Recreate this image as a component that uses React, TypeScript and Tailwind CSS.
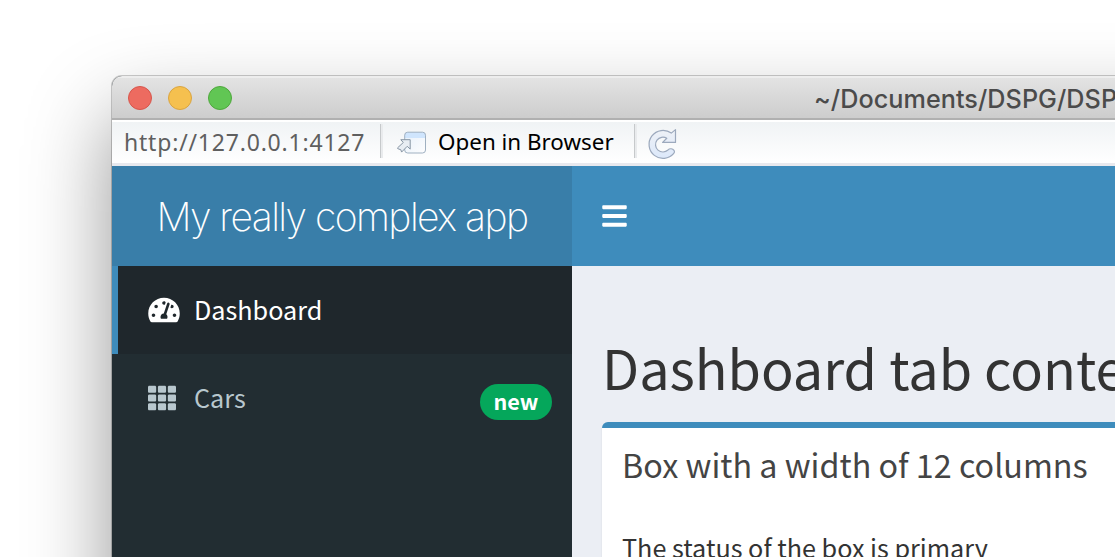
import { FaBars, FaTachometerAlt, FaTh } from 'react-icons/fa';

const source = "font-['Noto_Sans_CJK_SC','Noto_Sans',sans-serif]";

function OpenIcon() {
  return (
    <svg className="h-[24px] w-[32px] shrink-0" viewBox="0 0 32 24">
      <defs>
        <linearGradient id="pane" x1="0" y1="0" x2="1" y2="1">
          <stop offset="0" stopColor="#e6f0fa" />
          <stop offset="1" stopColor="#fdfdfe" />
        </linearGradient>
      </defs>
      <rect x="8.7" y="1.2" width="20.8" height="20.8" rx="3" fill="url(#pane)" />
      <path d="M8.7 7V4.2a3 3 0 0 1 3-3h14.8a3 3 0 0 1 3 3V7z" fill="#cfe5fd" />
      <rect x="8.7" y="1.2" width="20.8" height="20.8" rx="3" fill="none" stroke="#9fb0c1" />
      <path d="M4.8 8.7h9.4v9.4l-3-2.8-5.6 5.8-.8-2.4-2.6-.8-.8-.9 5.9-5.5z" fill="#e8edf3" stroke="#8795a4" strokeLinejoin="round" />
    </svg>
  );
}

function ReloadIcon() {
  return (
    <svg className="h-[32px] w-[30px] shrink-0" viewBox="0 0 30 32">
      <defs>
        <linearGradient id="arrow" x1="0" y1="0" x2="0" y2="1">
          <stop offset="0" stopColor="#eef1f6" />
          <stop offset="1" stopColor="#dce8fa" />
        </linearGradient>
      </defs>
      <path
        d="M24.3 5.1 28.5 1.6V14.4H15.6L19.8 10.3A7.4 7.4 0 1 0 21 22C22.6 20 25.8 20.6 27 22.3 27.9 23.7 27.6 24.6 26.8 25.4A14 14 0 1 1 24.3 5.1Z"
        fill="url(#arrow)"
        stroke="#9ca9bd"
        strokeWidth="1.2"
        strokeLinejoin="round"
      />
    </svg>
  );
}

function Divider() {
  return <div className="mb-[4px] h-[34px] w-[3px] shrink-0 border-l border-[#c6c9cb] bg-[#e9ebed]" />;
}

export default function App() {
  return (
    <div className="flex h-[557px] w-full overflow-hidden bg-white pt-[76px] pl-[112px]">
      <div className="flex h-[900px] w-[1500px] shrink-0 flex-col overflow-hidden rounded-[10px] bg-[#222d32] shadow-[0_0_0_1px_rgba(0,0,0,0.2),0_40px_84px_rgba(0,0,0,0.42)]">
        <div className="flex h-[44px] shrink-0 items-center border-t-2 border-b-2 border-t-[#ededed] border-b-[#b0b0b0] bg-linear-to-b from-[#e3e3e3] to-[#cdcdcd] pl-[16px]">
          <div className="flex w-[686px] shrink-0 gap-[16px]">
            <div className="size-[24px] rounded-full border border-[#d6564c] bg-[#ed6b60]" />
            <div className="size-[24px] rounded-full border border-[#d9a441] bg-[#f5c04f]" />
            <div className="size-[24px] rounded-full border border-[#4fa73d] bg-[#61c654]" />
          </div>
          <span className="pt-px font-['Inter',sans-serif] text-[25.2px] leading-[32px] font-[480] tracking-[0.05px] whitespace-nowrap text-[#4b4b4b]">
            ~/Documents/DSPG/DSP
          </span>
        </div>

        <div className="flex h-[46px] shrink-0 items-center border-t-2 border-b-3 border-t-white border-b-[#e8e9ee] bg-linear-to-b from-[#f0f3f5] to-white pl-[12px] font-['Noto_Sans',sans-serif]">
          <span className="w-[256px] shrink-0 pb-[2px] text-[23px] leading-[30px] tracking-[0.8px] whitespace-nowrap text-[#5f5f5f]">
            http://127.0.0.1:4127
          </span>
          <Divider />
          <div className="flex w-[251px] shrink-0 items-center pl-[13px]">
            <OpenIcon />
            <span className="ml-[10px] pb-[2px] text-[22.4px] leading-[30px] whitespace-nowrap text-black">Open in Browser</span>
          </div>
          <Divider />
          <div className="pt-[2px] pl-[10px]">
            <ReloadIcon />
          </div>
        </div>

        <div className="flex h-[100px] shrink-0 text-white">
          <div className="flex w-[460px] shrink-0 items-center justify-center bg-[#397ea9]">
            <span className="pt-px font-['Inter',sans-serif] text-[39px] leading-[60px] font-[150] tracking-[-1.55px] whitespace-nowrap">
              My really complex app
            </span>
          </div>
          <div className="flex grow items-center bg-[#3e8cbc] pb-px pl-[30px]">
            <FaBars className="h-[28px] w-[25px]" />
          </div>
        </div>

        <div className={`flex grow ${source}`}>
          <nav className="flex w-[460px] shrink-0 flex-col bg-[#222d32] text-[25.2px] leading-[40px]">
            <div className="flex h-[88px] items-center border-l-6 border-[#3e8cbc] bg-[#1f272c] pl-[30px] text-white">
              <FaTachometerAlt className="mb-px h-[28px] w-[32px]" />
              <span className="pb-[2px] pl-[14px]">Dashboard</span>
            </div>
            <div className="flex h-[88px] items-center pr-[20px] pl-[36px] text-[#b8c7ce]">
              <FaTh className="mb-px h-[28px] w-[28px]" />
              <span className="grow pb-[2px] pl-[18px]">Cars</span>
              <span className="mt-[8px] h-[36px] w-[72px] rounded-full bg-[#05a75b] text-center text-[21.6px] leading-[34px] font-bold text-white">
                new
              </span>
            </div>
          </nav>
          <main className="grow bg-[#ebeef4] pt-[71px] pl-[30px] text-[#333]">
            <h2 className="text-[54px] leading-[60px] whitespace-nowrap">Dashboard tab content</h2>
            <section className="mt-[25px] h-[300px] rounded-[6px] border-t-6 border-[#3e8cbc] bg-white pt-[18px] pl-[20px] shadow-[0_2px_2px_rgba(0,0,0,0.1)]">
              <h3 className="text-[32.3px] leading-[36px] text-[#444]">Box with a width of 12 columns</h3>
              <p className="mt-[45px] text-[25.2px] leading-[40px]">The status of the box is primary</p>
            </section>
          </main>
        </div>
      </div>
    </div>
  );
}
